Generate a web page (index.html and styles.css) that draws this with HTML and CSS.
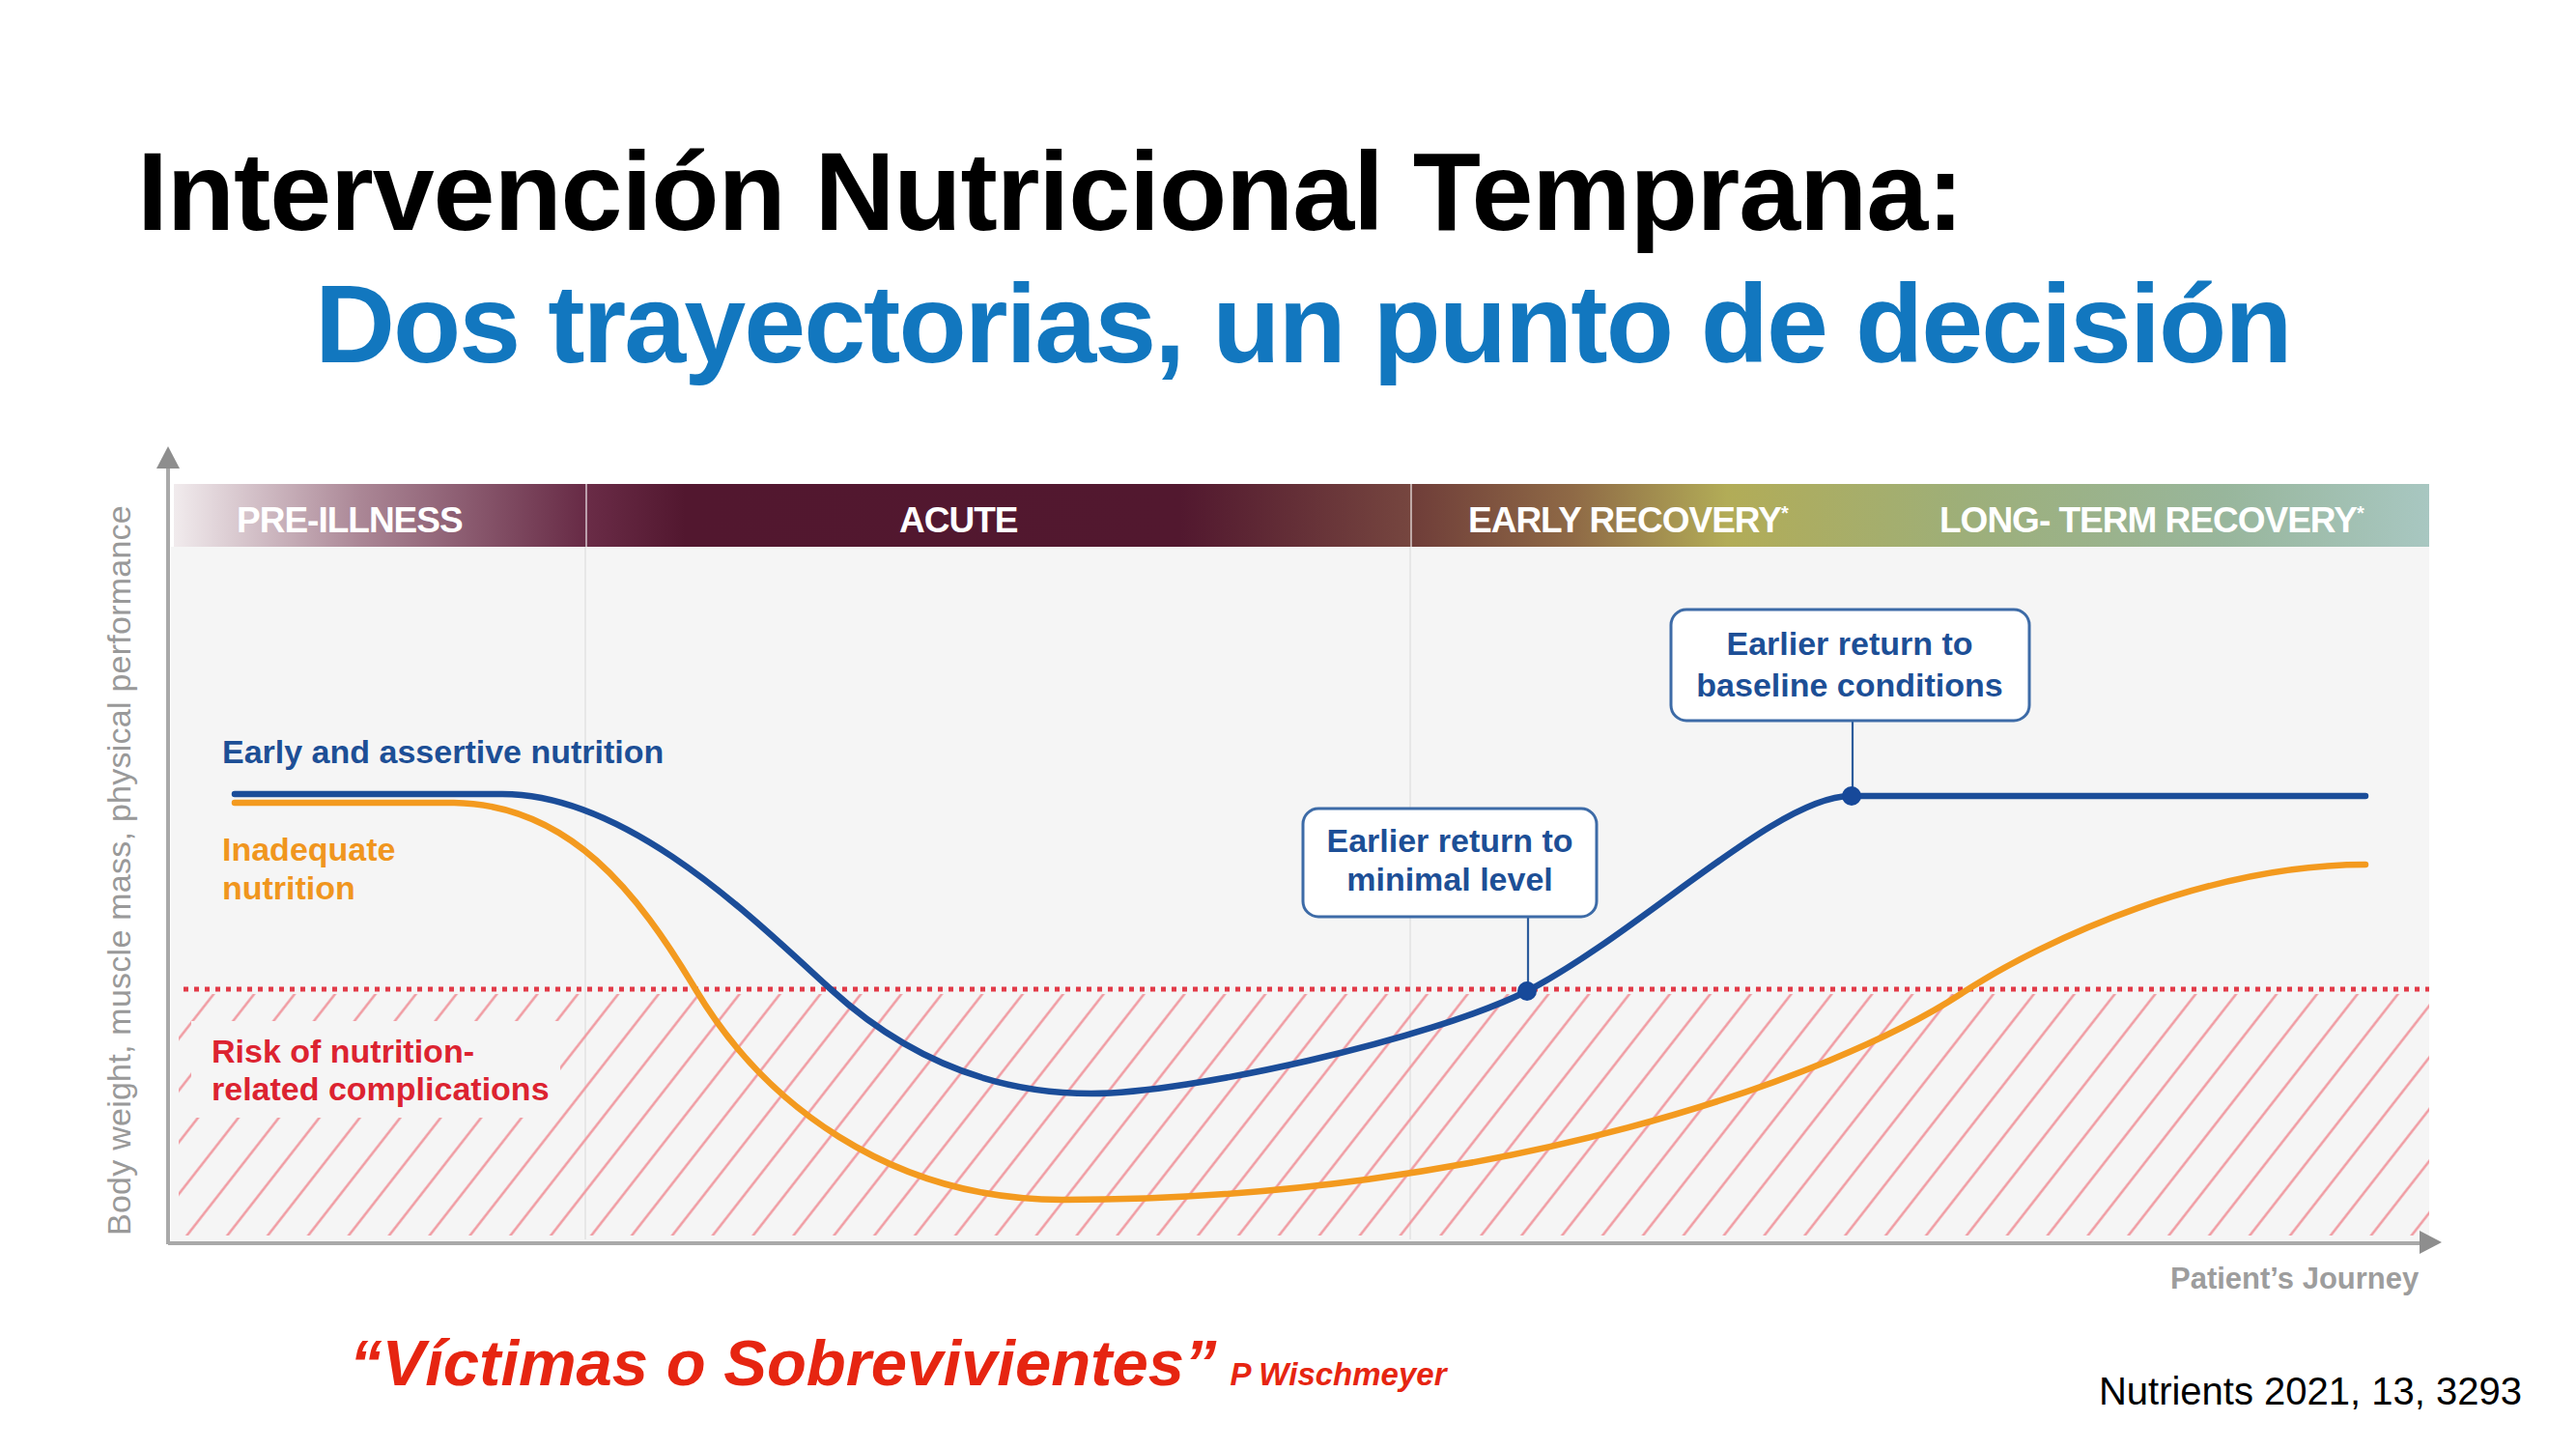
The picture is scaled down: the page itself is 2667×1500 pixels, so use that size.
FILE: index.html
```html
<!DOCTYPE html>
<html lang="es">
<head>
<meta charset="utf-8">
<title>Intervención Nutricional Temprana</title>
<link rel="stylesheet" href="styles.css">
</head>
<body>
<div class="slide">
  <header class="titles">
    <h1 class="title title-main">Intervención Nutricional Temprana:</h1>
    <h2 class="title title-sub">Dos trayectorias, un punto de decisión</h2>
  </header>

  <svg class="chart" viewBox="0 405 2667 955" xmlns="http://www.w3.org/2000/svg">
    <defs>
      <linearGradient id="gPre" x1="0" y1="0" x2="1" y2="0">
        <stop offset="0" stop-color="#f1ebed"/>
        <stop offset="0.45" stop-color="#ab8796"/>
        <stop offset="1" stop-color="#672a45"/>
      </linearGradient>
      <linearGradient id="gAcute" x1="0" y1="0" x2="1" y2="0">
        <stop offset="0" stop-color="#6a2c47"/>
        <stop offset="0.12" stop-color="#52172f"/>
        <stop offset="0.72" stop-color="#52182f"/>
        <stop offset="1" stop-color="#76463f"/>
      </linearGradient>
      <linearGradient id="gRec" x1="0" y1="0" x2="1" y2="0">
        <stop offset="0" stop-color="#6f3d39"/>
        <stop offset="0.16" stop-color="#8f6a46"/>
        <stop offset="0.31" stop-color="#b2ac57"/>
        <stop offset="0.55" stop-color="#9daf7a"/>
        <stop offset="0.8" stop-color="#98b69c"/>
        <stop offset="1" stop-color="#a8c7c1"/>
      </linearGradient>
      <pattern id="hatch" patternUnits="userSpaceOnUse" width="33" height="33" patternTransform="rotate(38)">
        <line x1="16.5" y1="-5" x2="16.5" y2="38" class="hatch-line"/>
      </pattern>
    </defs>

    <!-- plot background -->
    <rect class="plot-bg" x="177" y="567" width="2338" height="719"/>
    <line class="phase-line" x1="606" y1="567" x2="606" y2="1284"/>
    <line class="phase-line" x1="1460" y1="567" x2="1460" y2="1284"/>

    <!-- phase band -->
    <rect x="180" y="502" width="427" height="65" fill="url(#gPre)"/>
    <rect x="607" y="502" width="854" height="65" fill="url(#gAcute)"/>
    <rect x="1461" y="502" width="1054" height="65" fill="url(#gRec)"/>
    <line class="band-div" x1="607" y1="502" x2="607" y2="567"/>
    <line class="band-div" x1="1461" y1="502" x2="1461" y2="567"/>
    <text class="t-band" x="245" y="552">PRE-ILLNESS</text>
    <text class="t-band" x="931" y="552">ACUTE</text>
    <text class="t-band" x="1520" y="552">EARLY RECOVERY<tspan class="t-ast" dy="-13">*</tspan></text>
    <text class="t-band" x="2008" y="552">LONG- TERM RECOVERY<tspan class="t-ast" dy="-13">*</tspan></text>

    <!-- risk zone -->
    <rect x="185" y="1030" width="2330" height="250" fill="url(#hatch)"/>
    <rect class="plot-bg" x="198" y="1058" width="382" height="100"/>
    <line class="risk-line" x1="190" y1="1025" x2="2515" y2="1025"/>

    <!-- axes -->
    <line class="axis" x1="174" y1="480" x2="174" y2="1289"/>
    <polygon class="axis-head" points="174,463 162,486 186,486"/>
    <line class="axis" x1="174" y1="1288" x2="2508" y2="1288"/>
    <polygon class="axis-head" points="2528,1287 2505,1275 2505,1299"/>
    <text class="t-ylabel" transform="translate(135,1280) rotate(-90)">Body weight, muscle mass, physical performance</text>
    <text class="t-xlabel" x="2247" y="1335">Patient’s Journey</text>

    <!-- curves -->
    <path class="curve-orange" d="M243,832 H470 C590,834 660,925 720,1025 C790,1142 920,1243 1100,1243 C1550,1243 1900,1115 2030,1030 C2120,971 2290,896 2449,896"/>
    <path class="curve-blue" d="M243,823 H520 C650,823 780,952 860,1025 C940,1098 1030,1133 1130,1133 C1230,1133 1481,1077 1581,1027 C1700,965 1840,825 1916,825 H2449"/>

    <!-- callouts -->
    <line class="leader" x1="1582" y1="950" x2="1582" y2="1027"/>
    <line class="leader" x1="1918" y1="747" x2="1918" y2="825"/>
    <circle class="dot" cx="1581" cy="1027" r="10"/>
    <circle class="dot" cx="1917" cy="825" r="10"/>
    <rect class="callout" x="1349" y="838" width="304" height="112" rx="16"/>
    <text class="t-callout" x="1501" y="883">Earlier return to</text>
    <text class="t-callout" x="1501" y="923">minimal level</text>
    <rect class="callout" x="1730" y="632" width="371" height="115" rx="16"/>
    <text class="t-callout" x="1915" y="679">Earlier return to</text>
    <text class="t-callout" x="1915" y="722">baseline conditions</text>

    <!-- series labels -->
    <text class="t-label t-blue" x="230" y="791">Early and assertive nutrition</text>
    <text class="t-label t-orange" x="230" y="892">Inadequate</text>
    <text class="t-label t-orange" x="230" y="932">nutrition</text>
    <text class="t-label t-red" x="219" y="1101">Risk of nutrition-</text>
    <text class="t-label t-red" x="219" y="1140">related complications</text>
  </svg>

  <footer class="footer">
    <p class="quote">“Víctimas o Sobrevivientes”<span class="author">P Wischmeyer</span></p>
    <p class="source">Nutrients 2021, 13, 3293</p>
  </footer>
</div>
</body>
</html>
```

FILE: styles.css
```css
html, body {
  margin: 0;
  padding: 0;
  background: #ffffff;
}

body {
  width: 2667px;
  height: 1500px;
  overflow: hidden;
  font-family: "Liberation Sans", Arial, Helvetica, sans-serif;
}

.slide {
  display: flex;
  flex-direction: column;
  width: 2667px;
  height: 1500px;
}

.titles {
  padding-top: 130px;
}

.title {
  margin: 0;
  font-size: 115px;
  line-height: 137px;
  font-weight: 700;
  white-space: nowrap;
}

.title-main {
  padding-left: 142px;
  letter-spacing: -1.1px;
  color: #000000;
}

.title-sub {
  padding-left: 326px;
  letter-spacing: -2px;
  color: #1277bf;
}

.chart {
  display: block;
  width: 2667px;
  height: 955px;
  flex: none;
}

.plot-bg { fill: #f5f5f5; }
.phase-line { stroke: #e7e7e7; stroke-width: 2; }
.band-div { stroke: rgba(255, 255, 255, 0.55); stroke-width: 2; }
.hatch-line { stroke: #f0939a; stroke-width: 2.3; }
.risk-line { stroke: #e23b48; stroke-width: 5; stroke-dasharray: 5 6; }
.axis { stroke: #a9a9a9; stroke-width: 4; }
.axis-head { fill: #8e8e8e; }

.curve-blue { fill: none; stroke: #1b4d99; stroke-width: 6.5; stroke-linecap: round; }
.curve-orange { fill: none; stroke: #f39a1f; stroke-width: 6.5; stroke-linecap: round; }
.leader { stroke: #2d5c9c; stroke-width: 2.2; }
.dot { fill: #17499a; }
.callout { fill: #ffffff; stroke: #3d6ba7; stroke-width: 3; }

.t-band {
  fill: #ffffff;
  font-family: "Liberation Sans", Arial, sans-serif;
  font-weight: 700;
  font-size: 37px;
  letter-spacing: -1px;
}
.t-ast { font-size: 20px; }

.t-callout {
  fill: #1d4f96;
  font-family: "Liberation Sans", Arial, sans-serif;
  font-weight: 700;
  font-size: 34px;
  text-anchor: middle;
}

.t-label {
  font-family: "Liberation Sans", Arial, sans-serif;
  font-weight: 700;
  font-size: 34px;
}
.t-blue { fill: #1d4f96; }
.t-orange { fill: #f0961e; }
.t-red { fill: #dc2330; }

.t-ylabel {
  fill: #999999;
  font-family: "Liberation Sans", Arial, sans-serif;
  font-size: 34px;
  letter-spacing: 0.25px;
}

.t-xlabel {
  fill: #9d9d9d;
  font-family: "Liberation Sans", Arial, sans-serif;
  font-weight: 700;
  font-size: 31px;
}

.footer {
  display: flex;
  align-items: flex-start;
  height: 140px;
  flex: none;
}

.quote {
  margin: 14px 0 0 362px;
  font-size: 67px;
  line-height: 76px;
  font-weight: 700;
  font-style: italic;
  color: #e62511;
  white-space: nowrap;
}

.author {
  margin-left: 14px;
  font-size: 33px;
}

.source {
  margin: 58px 56px 0 auto;
  font-size: 40px;
  line-height: 46px;
  color: #000000;
  white-space: nowrap;
}
```
